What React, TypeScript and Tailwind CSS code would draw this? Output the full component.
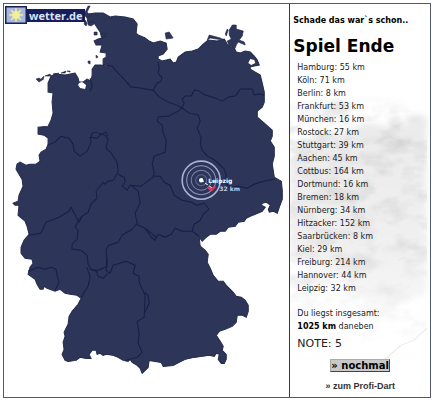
import React from "react";

const results: [string, number][] = [
  ["Hamburg", 55], ["Köln", 71], ["Berlin", 8], ["Frankfurt", 53],
  ["München", 16], ["Rostock", 27], ["Stuttgart", 39], ["Aachen", 45],
  ["Cottbus", 164], ["Dortmund", 16], ["Bremen", 18], ["Nürnberg", 34],
  ["Hitzacker", 152], ["Saarbrücken", 8], ["Kiel", 29], ["Freiburg", 214],
  ["Hannover", 44], ["Leipzig", 32],
];

const country =
  "M88 14L95 13L103 13L110 17L115 16L125 17L133 19L137 24L136 33L138 35L145 38L149 41L153 43L160 41L166 43L167 49L163 54L158 56L158 59L162 61L170 59L173 63L176 62L178 57L185 52L192 51L198 49L203 44L208 40L217 41L224 39L227 44L230 47L234 48L236 52L240 53L245 51L250 52L254 56L257 60L259 65L254 66L250 67L250 69L255 72L260 75L262 83L264 92L264 102L262 107L257 111L257 117L264 123L272 130L272 136L270 141L274 147L274 156L272 164L274 177L281 181L282 190L282 199L279 207L277 213L273 211L269 212L268 209L270 205L266 202L262 203L261 205L265 207L262 211L255 214L250 216L246 218L244 221L238 222L235 226L228 227L225 231L220 231L216 234L210 234L206 237L202 241L199 237L200 246L205 250L208 254L207 262L210 268L213 275L218 281L223 281L226 285L233 292L236 296L241 297L245 300L248 305L248 311L246 317L242 315L237 315L236 322L232 326L225 329L219 331L216 335L220 341L223 346L222 350L226 354L226 359L224 363L221 363L218 359L219 354L216 353L214 356L209 355L202 356L194 357L185 359L179 362L173 365L163 366L161 362L155 361L149 360L148 367L142 373L140 368L137 365L132 362L130 359L128 361L123 360L118 357L113 355L106 354L103 355L100 353L97 354L96 350L92 350L89 354L91 358L86 358L80 357L76 360L68 361L65 360L62 354L64 349L63 342L65 336L64 332L68 324L69 316L72 311L78 304L81 298L77 295L70 294L65 293L60 289L55 291L47 288L44 286L43 289L40 289L37 284L35 279L28 274L30 267L33 263L32 259L25 258L21 253L21 247L24 240L29 234L27 226L25 221L18 215L19 205L15 205L13 203L18 201L19 195L23 186L22 179L16 169L17 164L20 162L26 165L30 164L36 164L40 161L39 155L41 152L46 149L48 144L48 138L44 135L38 134L38 127L48 126L51 120L53 113L52 102L53 93L48 92L48 83L51 76L55 74L65 75L75 73L78 78L79 82L83 82L87 79L91 81L92 75L92 69L95 65L101 65L107 67L108 64L103 65L103 59L106 57L106 53L100 52L102 45L96 45L94 41L98 39L102 38L100 32L96 26L94 23L88 23L87 18Z";

const borders = [
  "M103 65L112 66L118 73L123 78L131 87L140 88L151 90L153 90L159 97L168 102L177 105L182 108L189 113L198 115L200 121L197 128L199 133",
  "M158 62L159 68L158 73L162 78L160 82L157 83L153 90",
  "M182 108L184 103L182 99L185 96L191 96L194 90L199 91L205 95L215 98L222 101L228 97L235 96L240 89L252 89L254 95L259 94L264 95",
  "M182 108L178 111L172 114L169 116L158 117L157 121L162 125L163 133L166 140L165 152L154 156L152 164L154 172L153 177",
  "M199 133L201 138L200 144L202 150L207 156L213 159L219 164L224 169L226 175L225 183L230 187L238 186L247 188L254 184L263 181L274 179",
  "M154 176L160 176L164 182L170 185L174 195L182 200L191 202L197 205L204 203L209 209L203 214L200 220L194 224L192 231L182 231L175 228L171 234L165 237L158 234L155 240L151 237L145 228",
  "M192 231L199 236",
  "M48 145L55 142L61 136L69 138L73 144L74 151L80 156L87 151L91 142L90 137L97 138L101 134L105 135L108 139L106 148L111 153L117 162L118 172L113 180L108 181L105 184L103 182L96 191L97 198L91 204L88 212L82 216L79 222L71 207L69 211L59 217L46 222L41 233L29 235",
  "M118 174L124 177L125 182L122 186L127 190L130 185L141 186L145 183L153 177",
  "M132 186L138 191L140 203L135 213L137 223L132 229L122 235L118 242L109 245L106 249L107 266L96 271L91 269L88 264L87 255L81 250L72 249L72 244L77 239L78 230L75 227L79 219L82 216",
  "M136 224L145 228L156 237",
  "M28 271L38 267L45 269L51 267L56 269L57 275L59 282L55 290",
  "M87 267L90 277L88 286L84 292L81 298",
  "M107 258L106 270L110 273L113 265L126 261L135 265L133 273L139 276L139 282L145 295L144 317L137 321L139 334L138 343L142 352L137 357L125 360",
  "M90 269L96 270L98 276L103 278L108 273",
  "M145 292L148 295L149 303L145 312",
  "M91 137L92 133L96 132L101 134L106 132L108 136",
  "M90 78L92 86L90 91",
];

const islands =
  "M88 6L90 6L87 12L90 16L87 18L84 15L86 10ZM85 20L87 23L86 26L84 24ZM88 23L92 21L94 24L91 26L88 25ZM94 32L97 32L97 35L94 35ZM101 34L106 33L105 37L101 37ZM96 55L98 57L96 58ZM88 61L90 61L90 64L88 63ZM36 79L39 78L42 80L39 82ZM41 79L44 76L43 80ZM45 76L50 74L51 76ZM53 74L59 73L58 74ZM61 73L66 71L65 73ZM67 71L70 71L70 72ZM165 33L169 32L173 38L166 39ZM225 34L227 29L228 30L226 36ZM229 30L232 25L236 25L236 29L243 31L242 36L239 40L244 42L245 45L238 42L236 45L235 48L229 46L227 41L231 39L229 35ZM207 40L209 35L220 38L224 40L216 39L210 38Z";

function GermanyMap() {
  return (
    <svg viewBox="4 4 285 393" className="block h-auto w-full" role="img" aria-label="Deutschlandkarte">
      <path d={country} fill="#2d3559" stroke="#252c4d" />
      <path d={islands} fill="#2d3559" stroke="#202746" strokeWidth=".6" />
      <path d="M79 83L82 82L86 85L85 89L80 88L78 85Z M250 59L254 60L255 63L251 65L248 63Z" fill="#fff" />
      <g fill="none" stroke="#171e49" strokeWidth="1" strokeLinejoin="round">
        {borders.map((d) => <path key={d} d={d} />)}
      </g>
      <g fill="none" stroke="#a9b2d4">
        <circle cx="201" cy="180" r="19" strokeWidth="1.6" />
        <circle cx="201" cy="180" r="14.5" stroke="#8f9ac0" />
        <circle cx="201" cy="180" r="10" stroke="#7a86b0" />
        <circle cx="201" cy="180" r="5.5" stroke="#5f6b97" />
      </g>
      <circle cx="201" cy="180" r="2.2" fill="#fff" />
      <path d="M201 180L212 188" stroke="#fff" strokeDasharray="3 2" />
      <path d="M208 187L211 190M211 190L215 186" stroke="#dc365d" strokeWidth="2.5" />
      <g fontFamily="DejaVu Sans, Verdana, sans-serif" fontSize="6" fontWeight="700">
        <text x="208" y="183" fill="#fff">Leipzig</text>
        <text x="219" y="191" fill="#c5cbe2">32 km</text>
      </g>
    </svg>
  );
}

function Logo() {
  return (
    <div className="absolute top-0.5 left-px flex items-center">
      <svg width="22" height="18" viewBox="0 0 22 18" aria-hidden="true">
        <rect x=".75" y=".75" width="20.5" height="16.5" fill="#a9b7d8" stroke="#17205a" strokeWidth="1.5" />
        <path d="M11 2V16M4 9H18M6 4L16 14M16 4L6 14" stroke="#f0edaa" strokeWidth="1.4" />
        <circle cx="11" cy="9" r="4" fill="#f1ee98" />
      </svg>
      <span className="bg-[#151d5b] px-0.5 font-['Open_Sans','Noto_Sans',sans-serif] text-[11px] leading-[13px] font-bold text-[#dce2f3]">wetter.de</span>
    </div>
  );
}

function CloudBackdrop() {
  return (
    <svg viewBox="0 0 140 393" preserveAspectRatio="none" className="absolute inset-0 h-full w-full" aria-hidden="true">
      <defs>
        <filter id="grain" x="0" y="0" width="100%" height="100%">
          <feTurbulence type="fractalNoise" baseFrequency=".035 .06" numOctaves="4" seed="8" />
          <feColorMatrix values="0 0 0 0 .55  0 0 0 0 .55  0 0 0 0 .55  2.6 0 0 0 -1.1" />
        </filter>
        <filter id="soft"><feGaussianBlur stdDeviation="3" /></filter>
        <linearGradient id="fade" x2="0" y2="1">
          <stop offset="0" stopColor="#000" />
          <stop offset=".12" stopColor="#fff" />
          <stop offset=".6" stopColor="#bbb" />
          <stop offset="1" stopColor="#000" />
        </linearGradient>
        <mask id="range"><rect y="90" width="140" height="270" fill="url(#fade)" /></mask>
      </defs>
      <g mask="url(#range)">
        <path d="M0 155L30 125L50 130L75 118L105 123L137 115V290L90 305L40 270L0 250Z" fill="#ebebeb" filter="url(#soft)" />
        <rect y="90" width="137" height="270" filter="url(#grain)" opacity=".55" />
      </g>
      <g fill="#e6e6e6" filter="url(#soft)">
        <ellipse cx="48" cy="104" rx="13" ry="7" />
        <ellipse cx="126" cy="116" rx="11" ry="5" />
      </g>
      <g fill="none" stroke="#e8e8e8">
        <path d="M137 324L124 336L111 341L94 356M132 246L121 252M115 253L108 256" />
      </g>
    </svg>
  );
}

export default function App() {
  return (
    <main className="bg-white p-[3px] font-['DejaVu_Sans',Verdana,sans-serif] text-[#222]">
      <div className="grid grid-cols-[287fr_140fr] border border-[#55576b]">
        <section className="relative border-r border-[#34365c]">
          <GermanyMap />
          <Logo />
        </section>
        <aside className="relative">
          <CloudBackdrop />
          <div className="relative px-[3px] pt-[10px] whitespace-nowrap">
            <p className="text-[8px] leading-[13px] font-bold text-black">Schade das war`s schon..</p>
            <h1 className="mt-2 text-[17px] leading-[22px] font-bold text-black">Spiel Ende</h1>
            <ul className="mt-1 pl-1 text-[8px] leading-[13px]">
              {results.map(([city, km]) => <li key={city}>{city}: {km} km</li>)}
            </ul>
            <p className="mt-3 pl-1 text-[8px] leading-[13px]">
              Du liegst insgesamt:<br /><b className="text-black">1025 km</b> daneben
            </p>
            <p className="mt-1 pl-1 text-[11px] leading-[14px]">NOTE: 5</p>
            <div className="mt-2 flex flex-col items-center gap-2">
              <button type="button" className="border border-t-[#aaa] border-r-[#444] border-b-[#444] border-l-[#aaa] bg-[#c8c8c8] text-[10px] leading-[11px] font-bold text-black">» nochmal</button>
              <a href="#profi" className="font-['Liberation_Sans',Arial,sans-serif] text-[9px] leading-[13px] font-bold text-[#333]">» zum Profi-Dart</a>
            </div>
          </div>
        </aside>
      </div>
    </main>
  );
}
